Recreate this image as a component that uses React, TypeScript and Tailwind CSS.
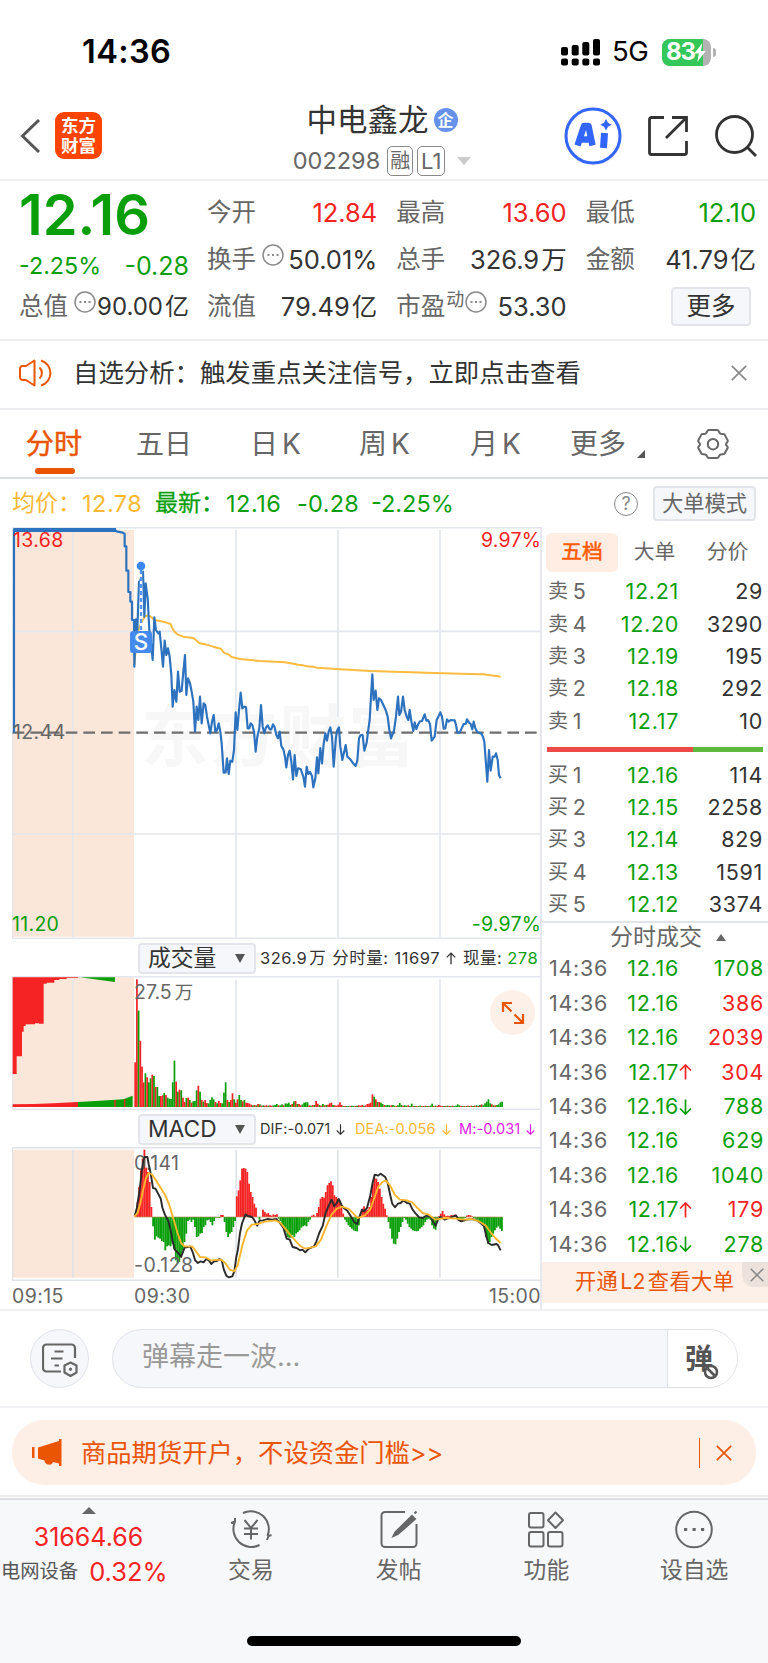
import type { ReactNode } from "react";
import clsx from "clsx";

const GREEN = "#0a9f0a";
const RED = "#f52323";

const PRICE_LINE =
  "42,638 42,30 345,30 350,34 368,38 374,42 374,79 379,79 379,152 385,152 385,216 391,216 391,245 396,245 396,300 402,300 403,440 408,298 412,330 417,186 424,175 429,155 433,290 437,190 443,235 448,330 453,370 458,420 463,292 468,330 475,340 479,335 484,385 489,440 494,362 499,405 504,385 509,410 514,465 518,560 523,510 529,545 534,455 539,515 545,512 550,455 555,405 559,525 564,475 570,490 575,515 580,545 585,635 590,560 595,600 600,530 605,610 611,550 616,555 621,590 626,615 631,640 636,605 641,585 646,635 651,630 656,610 661,635 665,670 671,758 677,757 681,715 686,762 691,722 697,725 702,690 707,577 712,630 717,570 722,518 727,565 733,560 738,562 743,625 748,625 752,610 757,615 762,635 767,695 772,650 778,625 783,555 788,620 793,640 798,622 803,616 809,628 814,628 819,613 824,622 829,645 834,655 839,635 844,678 850,688 855,710 859,742 864,705 869,692 874,725 879,778 884,705 889,768 894,745 902,747 910,770 915,800 920,740 925,762 930,756 936,768 940,802 946,775 951,712 955,760 961,684 966,730 971,672 976,640 981,662 986,635 991,622 996,650 1001,740 1008,650 1012,630 1017,622 1021,680 1027,720 1037,675 1042,710 1050,717 1058,728 1067,738 1072,722 1077,655 1082,645 1088,645 1093,692 1100,668 1105,628 1109,600 1113,530 1117,463 1121,540 1127,512 1132,570 1137,535 1143,540 1150,555 1157,570 1163,590 1168,630 1173,655 1182,632 1188,590 1194,530 1198,585 1203,575 1209,530 1214,570 1220,590 1225,600 1229,570 1235,610 1240,633 1244,607 1249,627 1255,612 1260,604 1266,603 1274,583 1279,602 1284,600 1290,612 1295,662 1304,650 1310,600 1315,590 1321,577 1326,590 1331,626 1336,625 1341,598 1346,605 1352,600 1364,601 1368,615 1372,638 1379,638 1385,625 1391,612 1397,612 1401,598 1407,608 1412,612 1417,628 1421,605 1426,625 1432,636 1444,641 1449,650 1453,665 1462,785 1467,690 1472,752 1478,710 1484,710 1488,700 1493,720 1497,765 1502,775";

const AVG_LINE =
  "403,435 408,380 412,345 417,325 425,305 434,290 443,286 453,290 462,300 480,303 497,307 512,312 517,325 524,336 534,344 550,350 580,354 588,360 597,369 620,374 640,380 662,386 672,398 685,403 695,411 720,417 780,423 855,427 880,431 895,434 910,436 920,439 940,440 950,443 1010,447 1110,453 1230,457 1380,461 1450,463 1470,466 1490,468 1502,470";

// bar heights per minute, negative values are drawn green
const VOLUMES = [
  134, 383, -289, 199, 121, 74, -101, 89, -74, -86, 97, -93, 60, -60, -33, 33, 35, -42, 36, -28, -25, -24, -74, -139,
  76, -46, 52, -50, 28, 15, -27, 28, -21, 13, -17, -18, -50, 64, -46, 21, -16, 21, 12, -11, -21, -29, -23, 15, -11, 18,
  12, -11, -43, -74, 21, -15, 21, 41, -23, 13, 23, -36, -21, 17, -21, 13, 12, 10, 7, -5, 6, -5, 9, -8, 4, -5, 4, 5, -4,
  5, 4, -5, -6, -9, 5, -5, -8, 5, -11, -10, -13, -6, 9, -17, 18, -9, 9, 5, -8, -13, -14, -14, 5, -4, 6, -6, 18, 10, -6,
  4, -9, 5, -6, 7, 11, 13, -6, 5, 4, 7, 14, 6, -3, 3, -3, -3, 3, -4, -3, 3, -4, 5, 4, 6, -4, 5, 9, 10, 13, 38, -31, 23,
  -15, 15, -13, -9, 6, -5, -6, -5, 5, -6, -4, 3, -5, -12, -6, 4, -5, -4, 5, -3, -10, 3, -3, 3, -3, -4, 3, -3, 4, -3, 3,
  -4, -10, 3, -4, 3, 6, 4, 3, -3, 3, -4, 3, -3, 4, -3, -4, -8, -5, 3, -3, 3, -3, 4, -3, 4, -3, 4, -5, 3, -6, 8, -5, -11,
  -16, -23, -11, 8, -5, 5, -6, -8, -14, -16,
];

const MACD_BARS = [
  10, 45, 90, 140, 175, 202, 148, 135, 105, 30, -28, -68, -58, -62, -65, -72, -75, -100, -88, -85, -88, -80, -95, -130,
  -140, -135, -120, -100, -75, -50, -12, -8, -15, -8, -30, -60, -58, -50, -48, -30, -25, -10, -8, -15, -25, -12, -2, -2,
  -3, 6, 6, -15, -45, -60, -50, -45, -30, -12, 62, 80, 110, 145, 147, 145, 135, 100, 75, 60, 40, 28, 0, -8, 0, 22, 15,
  10, 12, 6, 4, 8, 6, 8, -5, -12, -25, -35, -45, -60, -62, -62, -55, -60, -50, -45, -40, -32, -28, -25, -28, -15, -8, 4,
  7, 2, 12, 30, 55, 60, 58, 75, 95, 102, 107, 95, 65, 60, 55, 45, 30, 10, -8, -15, -25, -30, -35, -40, -42, -43, -25, 5,
  25, 32, 22, 22, 30, 60, 100, 118, 115, 105, 85, 60, 40, 25, 5, -15, -35, -65, -80, -82, -65, -45, -30, -15, -3, -8,
  -20, -30, -35, -40, -42, -43, -42, -35, -30, -25, -15, -8, -5, -8, -25, -35, -38, -15, 3, 10, 18, 8, 3, 4, 3, 6, 5, 7,
  3, -3, -8, -10, -5, -3, 4, 6, 5, 2, -3, -5, -8, -12, -15, -22, -35, -60, -80, -75, -60, -50, -40, -32, -28, -35, -42,
];

const MACD_STEP = 1049 / MACD_BARS.length;

const DIF_LINE =
  "384,348 390,325 398,270 404,215 409,180 413,172 420,172 424,195 430,225 436,265 443,267 452,285 458,297 463,325 470,345 480,365 486,390 492,425 498,450 508,460 516,472 522,455 527,442 532,443 542,440 550,460 556,482 564,490 572,485 580,488 588,478 595,482 602,493 610,485 618,484 625,478 632,482 638,510 645,528 652,533 662,530 668,515 673,475 678,450 684,400 690,370 700,344 706,349 718,352 724,360 733,378 740,363 750,362 762,358 775,360 788,358 798,370 808,385 817,417 826,420 834,442 845,445 855,452 862,450 870,458 880,447 895,440 902,425 910,400 920,378 928,340 936,320 945,300 953,320 960,310 966,298 973,315 980,325 990,333 1000,350 1010,368 1018,373 1025,350 1032,330 1038,335 1046,325 1055,290 1062,250 1068,225 1078,228 1085,222 1098,232 1105,250 1112,285 1118,312 1126,323 1134,312 1142,310 1150,302 1160,310 1168,312 1175,328 1185,342 1195,353 1205,355 1215,348 1228,352 1235,368 1242,378 1248,360 1256,352 1268,360 1280,355 1300,347 1306,360 1315,365 1330,360 1345,358 1358,362 1370,370 1380,380 1386,410 1392,430 1402,436 1415,433 1420,437 1427,452";

const DEA_LINE =
  "384,350 392,340 400,310 408,270 416,235 424,220 432,223 440,235 455,260 470,285 482,315 495,360 506,400 516,430 526,440 548,440 560,457 570,472 585,473 600,482 630,480 642,490 655,510 668,515 678,495 690,440 704,392 718,375 735,373 755,366 785,362 800,370 815,390 835,415 855,438 870,447 900,440 915,420 930,380 945,345 960,327 975,321 995,328 1010,345 1020,355 1040,347 1055,330 1065,300 1078,262 1090,247 1100,243 1112,258 1125,285 1140,300 1160,302 1175,308 1190,325 1205,340 1222,345 1240,360 1270,355 1300,357 1325,360 1345,358 1365,365 1385,378 1400,400 1412,415 1427,430";

const SELLS = [
  ["5", "12.21", "29"],
  ["4", "12.20", "3290"],
  ["3", "12.19", "195"],
  ["2", "12.18", "292"],
  ["1", "12.17", "10"],
];

const BUYS = [
  ["1", "12.16", "114"],
  ["2", "12.15", "2258"],
  ["3", "12.14", "829"],
  ["4", "12.13", "1591"],
  ["5", "12.12", "3374"],
];

const TRADES = [
  { price: "12.16", arrow: "", vol: "1708", up: false },
  { price: "12.16", arrow: "", vol: "386", up: true },
  { price: "12.16", arrow: "", vol: "2039", up: true },
  { price: "12.17", arrow: "up", vol: "304", up: true },
  { price: "12.16", arrow: "down", vol: "788", up: false },
  { price: "12.16", arrow: "", vol: "629", up: false },
  { price: "12.16", arrow: "", vol: "1040", up: false },
  { price: "12.17", arrow: "up", vol: "179", up: true },
  { price: "12.16", arrow: "down", vol: "278", up: false },
];

function Arrow({ up, className }: { up?: boolean; className?: string }) {
  return (
    <svg viewBox="0 0 13 16" className={clsx("shrink-0", className)} fill="none" stroke="currentColor" strokeWidth="1.7">
      <path d={up ? "M6.5 15.5V1M1 6.5 6.5 1 12 6.5" : "M6.5 .5V15M1 9.500 6.500 15 12 9.500"} />
    </svg>
  );
}

function Cross({ className }: { className?: string }) {
  return (
    <svg viewBox="0 0 16 16" className={clsx("shrink-0", className)} fill="none" stroke="currentColor" strokeWidth="1.7">
      <path d="M.8.8l14.400 14.400M15.200.8.8 15.200" />
    </svg>
  );
}

function InfoDots() {
  return (
    <svg viewBox="0 0 22 22" className="mb-[9px] size-[22px] shrink-0" fill="none" stroke="#8a8a8a" strokeWidth="1.500">
      <circle cx="11" cy="11" r="10" />
      <path d="M5.500 11h2M10 11h2M14.500 11h2" strokeWidth="2" />
    </svg>
  );
}

function StatusBar() {
  return (
    <div className="flex h-[92px] items-center pt-[12px] pr-[52px] pl-[82px] text-black">
      <span className="text-[32.500px] font-semibold tracking-[0.4px]">14:36</span>
      <svg viewBox="0 0 39 27" className="ml-auto h-[27px] w-[39px]">
        <rect x="0" y="8" width="7" height="8.500" rx="2" />
        <rect x="10.700" y="6" width="7" height="10.500" rx="2" />
        <rect x="21.300" y="3" width="7" height="13.500" rx="2" />
        <rect x="32" y="0" width="7" height="16.500" rx="2" />
        <rect x="0" y="19.500" width="7" height="7" rx="2" />
        <rect x="10.700" y="19.500" width="7" height="7" rx="2" />
        <rect x="21.300" y="19.500" width="7" height="7" rx="2" />
        <rect x="32" y="19.500" width="7" height="7" rx="2" />
      </svg>
      <span className="ml-[12px] w-[37px] text-[27.500px] tracking-[-0.500px]">5G</span>
      <div className="ml-[13px] flex h-[27px] w-[49px] items-center overflow-hidden rounded-[8px] bg-[#b3b3b3]">
        <div className="flex h-full w-[41px] items-center bg-[#34c759] pl-[4px] text-[24px] font-bold tracking-[-1px] text-white">
          83
          <svg viewBox="0 0 12 20" className="relative -ml-px h-[19px] w-[12px] shrink-0 fill-white">
            <path d="M8.500 0 0 11h4.800L3.200 20 12 8.500H7z" />
          </svg>
        </div>
      </div>
      <div className="ml-[2px] h-[9px] w-[3px] rounded-r-full bg-[#b3b3b3]" />
    </div>
  );
}

function Header() {
  return (
    <div className="flex h-[89px] border-b-2 border-[#efeff1]">
      <div className="flex w-[282px] items-start pl-[20px]">
        <svg viewBox="0 0 20 34" className="mt-[27px] h-[34px] w-[20px]" fill="none" stroke="#555" strokeWidth="3">
          <path d="M19 1 2.500 17 19 33" />
        </svg>
        <div className="mt-[20px] ml-[15px] flex h-[47px] w-[47px] flex-col items-center justify-center rounded-[9px] bg-[#ff4400] text-[17.500px] leading-[20px] font-bold text-white">
          <span>东方</span>
          <span>财富</span>
        </div>
      </div>
      <div className="flex w-[200px] flex-col items-center">
        <div className="mt-[9px] flex h-[38px] items-center gap-[5px] text-[30.500px] text-[#333]">
          中电鑫龙
          <span className="flex size-[24px] items-center justify-center rounded-full bg-[#6591ea] text-[16px] font-bold text-white">
            企
          </span>
        </div>
        <div className="mt-[7px] flex h-[30px] items-center text-[23.500px] text-[#666]">
          <span>002298</span>
          <span className="ml-[7px] flex h-[30px] w-[26px] items-center justify-center rounded-[5px] border-[1.500px] border-[#888] text-[20px]">
            融
          </span>
          <span className="ml-[4px] flex h-[30px] w-[28px] items-center justify-center rounded-[5px] border-[1.500px] border-[#888] text-[22px]">
            L1
          </span>
          <svg viewBox="0 0 14 8" className="ml-[12px] h-[8px] w-[14px] fill-[#ccc]">
            <path d="M0 0h14L7 8z" />
          </svg>
        </div>
      </div>
      <div className="ml-auto flex items-start pt-[15px] pr-[11px]">
        <svg viewBox="0 0 58 58" className="size-[58px]" fill="none" stroke="#3366ff">
          <circle cx="29" cy="29" r="27" strokeWidth="3" />
          <path d="M13.500 38.500 20 19h4.500L28.500 38.500M17 32.500h10" strokeWidth="6.400" strokeLinejoin="round" />
          <path d="M40.500 26 39.500 41" strokeWidth="7" />
          <path d="M42 12l2 3.700 3.700 2-3.700 2-2 3.700-2-3.700-3.700-2 3.700-2z" fill="#3366ff" stroke="none" />
        </svg>
        <svg viewBox="0 0 40 40" className="mt-[9px] ml-[26px] size-[40px]" fill="none" stroke="#333" strokeWidth="2.800">
          <path d="M16 1.500H3.500a2 2 0 0 0-2 2v33a2 2 0 0 0 2 2h33a2 2 0 0 0 2-2V25M24 1.500h14.500V16M38.500 1.500 18 22" />
        </svg>
        <svg viewBox="0 0 42 42" className="mt-[8px] ml-[27px] size-[42px]" fill="none" stroke="#333" strokeWidth="2.800">
          <circle cx="19.500" cy="19.500" r="18" />
          <path d="M32 32l9 9" />
        </svg>
      </div>
    </div>
  );
}

interface StatProps {
  label: ReactNode;
  value: string;
  unit?: string;
  className?: string;
}

function Stat({ label, value, unit, className = "text-[25.500px] text-[#333]" }: StatProps) {
  return (
    <div className="flex h-[47px] items-center justify-between">
      <span className="flex items-center text-[24.500px] whitespace-nowrap text-[#666]">{label}</span>
      <span className={clsx("whitespace-nowrap", className)}>
        {value}
        {unit && <span className="ml-[2px]">{unit}</span>}
      </span>
    </div>
  );
}

function QuotePanel() {
  return (
    <div className="flex h-[160px] gap-[18px] border-b-2 border-[#ececee] pt-[8px] pr-[12px] pl-[19px]">
      <div className="flex w-[170px] flex-col">
        <div className="flex h-[52px] items-center text-[56px] font-semibold text-[#0a9f0a]">12.16</div>
        <div className="flex h-[42px] items-center justify-between pt-[8px] text-[#0a9f0a]">
          <span className="text-[23.300px]">-2.25%</span>
          <span className="text-[25px]">-0.28</span>
        </div>
        <Stat
          label={<>总值<span className="ml-[6px]"><InfoDots /></span></>}
          value="90.00"
          unit="亿"
          className="text-[24px] text-[#333]"
        />
      </div>
      <div className="grid flex-1 grid-cols-3 content-start gap-x-[19px]">
        <Stat label="今开" value="12.84" className="text-[25.500px] text-[#f52323]" />
        <Stat label="最高" value="13.60" className="text-[25.500px] text-[#f52323]" />
        <Stat label="最低" value="12.10" className="text-[25.500px] text-[#0a9f0a]" />
        <Stat label={<>换手<span className="ml-[6px]"><InfoDots /></span></>} value="50.01%" />
        <Stat label="总手" value="326.9" unit="万" />
        <Stat label="金额" value="41.79" unit="亿" />
        <Stat label="流值" value="79.49" unit="亿" />
        <Stat
          label={
            <>
              市盈<span className="mb-[14px] ml-[1px] text-[18px]">动</span>
              <span className="ml-[1px]"><InfoDots /></span>
            </>
          }
          value="53.30"
        />
        <div className="flex items-center justify-end pr-[5px]">
          <button className="h-[39px] w-[80px] rounded-[4px] border-2 border-[#e3e5eb] bg-[#f6f7fa] pb-[1px] text-[24.500px] text-[#333]">
            更多
          </button>
        </div>
      </div>
    </div>
  );
}

function Notice() {
  return (
    <div className="flex h-[69px] items-center border-b-2 border-[#ececee] pr-[21px] pb-[3px] pl-[19px]">
      <svg viewBox="0 0 34 28" className="h-[28px] w-[34px]" fill="none" stroke="#ea5504" strokeWidth="2">
        <path d="M15.500 1.500v25L7 21H3.500a2.500 2.500 0 0 1-2.500-2.500v-9A2.500 2.500 0 0 1 3.500 7H7z" strokeLinejoin="round" />
        <path d="M20.500 8.500a7.500 7.500 0 0 1 0 11M22 1.500a13 13 0 0 1 0 25" />
      </svg>
      <span className="ml-[20px] text-[25.400px] text-[#333]">自选分析：触发重点关注信号，立即点击查看</span>
      <Cross className="ml-auto size-[16px] text-[#888]" />
    </div>
  );
}

function PeriodTabs() {
  return (
    <div className="flex h-[69px] items-center border-b-2 border-[#dcdee6] pl-[26px] text-[28px] text-[#666]">
      <div className="relative w-[110px] text-[#ea5504] [-webkit-text-stroke:0.5px_#ea5504]">
        分时
        <div className="absolute top-[38px] left-[9px] h-[6px] w-[40px] rounded-[3px] bg-[#ea5504]" />
      </div>
      <div className="w-[114px]">五日</div>
      <div className="w-[109px] tracking-[4px]">日K</div>
      <div className="w-[111px] tracking-[4px]">周K</div>
      <div className="w-[100px] tracking-[4px]">月K</div>
      <div className="flex w-[127px] items-center">
        更多
        <svg viewBox="0 0 8 8" className="mt-[20px] ml-[11px] size-[8px] fill-[#555]">
          <path d="M8 0v8H0z" />
        </svg>
      </div>
      <svg viewBox="0 0 32 32" className="size-[32px]" fill="none" stroke="#666" strokeWidth="2">
        <path
          d="M11.500 2h9c1 0 1.500 2.800 2.800 3.600 1.300.8 3.500-.2 4.200.8l3.300 6.200c.5 1-1.800 2.200-1.800 3.600s2.300 2.600 1.800 3.600l-3.300 6c-.7 1-2.900 0-4.200.8-1.300.8-1.800 3.400-2.800 3.400h-9c-1 0-1.500-2.600-2.800-3.400-1.300-.8-3.500.2-4.200-.8l-3.300-6c-.5-1 1.800-2.200 1.800-3.600s-2.300-2.600-1.800-3.600l3.300-6.200c.7-1 2.900 0 4.200-.8C10 4.800 10.500 2 11.500 2z"
          strokeLinejoin="round"
        />
        <circle cx="16" cy="16.200" r="5.200" />
      </svg>
    </div>
  );
}

function SummaryRow() {
  return (
    <div className="flex h-[48px] items-center pt-[1px] pr-[12px] pl-[12px] text-[23.500px]">
      <span className="w-[70px] text-[23px] text-[#fdb933]">均价：</span>
      <span className="w-[73px] tracking-[0.500px] text-[#fdb933]">12.78</span>
      <span className="w-[71px] text-[23px] text-[#0a9f0a] [-webkit-text-stroke:0.3px_#0a9f0a]">最新：</span>
      <span className="w-[71px] tracking-[0.500px] text-[#0a9f0a]">12.16</span>
      <span className="w-[74px] tracking-[0.300px] text-[#0a9f0a]">-0.28</span>
      <span className="text-[#0a9f0a]">-2.25%</span>
      <span className="mr-[15px] ml-auto flex size-[24px] items-center justify-center rounded-full border-[1.500px] border-[#888] text-[18px] text-[#888]">
        ?
      </span>
      <button className="h-[35px] w-[103px] rounded-[4px] border-2 border-[#e3e5eb] bg-[#f6f7fa] text-[21.300px] whitespace-nowrap text-[#666]">
        大单模式
      </button>
    </div>
  );
}

function PriceChart() {
  return (
    <div className="relative h-[412px]">
      <svg viewBox="36 21 1590 1236" className="block h-[412px] w-[530px]" fill="none">
        <path d="M38 30h364v1220H38z" fill="#fbe6da" />
        <path d="M36 23h1590M37 23v1234M219 30v1220M708 30v1220M1014 30v1220M1320 30v1220M38 334h1586M38 942h1586M36 1255h1590" stroke="#e3e6ec" strokeWidth="5" />
        <text x="424" y="723" fontSize="200" fontWeight="700" letterSpacing="7" fill="#f7f7f7">东方财富</text>
        <path d="M38 638h1580" stroke="#6e6e6e" strokeWidth="7" strokeDasharray="35 18" />
        <polyline points={AVG_LINE} stroke="#fdbb3f" strokeWidth="6" strokeLinejoin="round" />
        <path d="M40 30h308" stroke="#2d72be" strokeWidth="12" />
        <polyline points={PRICE_LINE} stroke="#2d72be" strokeWidth="6.500" strokeLinejoin="round" />
        <path d="M423 150v185" stroke="#fff" strokeWidth="7" />
        <path d="M423 150v185" stroke="#4f97f2" strokeWidth="7" strokeDasharray="12 9" />
        <circle cx="423" cy="138" r="13" fill="#3b86f0" />
        <rect x="390" y="333" width="66" height="66" rx="10" fill="#4489ec" />
        <text x="423" y="389" textAnchor="middle" fontSize="67" fontWeight="500" fill="#fff">S</text>
      </svg>
      <span className="absolute top-[1px] left-[1px] text-[19.500px] leading-[24px] tracking-[0.400px] text-[#f52323]">13.68</span>
      <span className="absolute top-[1px] right-[1px] text-[19.500px] leading-[24px] tracking-[0.200px] text-[#f52323]">9.97%</span>
      <span className="absolute top-[193px] left-[1px] text-[19.500px] leading-[24px] tracking-[0.400px] text-[#666]">12.44</span>
      <span className="absolute top-[385px] left-[0px] text-[19.500px] leading-[24px] tracking-[0.300px] text-[#0a9f0a]">11.20</span>
      <span className="absolute top-[385px] right-[1px] text-[19.500px] leading-[24px] tracking-[0.200px] text-[#0a9f0a]">-9.97%</span>
    </div>
  );
}

function IndicatorSelect({ name }: { name: string }) {
  return (
    <button className="flex h-[31px] w-[118px] shrink-0 items-center rounded-[4px] border-2 border-[#e3e5eb] bg-[#f6f7fa] pr-[9px] pl-[8px] text-[22.800px] tracking-normal text-[#333]">
      {name}
      <svg viewBox="0 0 10 9" className="ml-auto h-[9px] w-[10px] fill-[#555]">
        <path d="M0 0h10L5 9z" />
      </svg>
    </button>
  );
}

function VolumeChart() {
  return (
    <div className="relative h-[134px]">
      <svg viewBox="36 108 1590 402" className="block h-[134px] w-[530px]">
        <path d="M38 112h364v388H38z" fill="#fbe6da" />
        <path d="M36 110h1590M36 508h1590M37 110v400M219 118v382M708 118v382M1014 118v382M1320 118v382" stroke="#e3e6ec" strokeWidth="5" fill="none" />
        <path d="M38 112V402h12V349h16V275h5V258h6V253h28V250h12v1h14V131h9V128h23V120h15V117h22V114h34V112z" fill={RED} />
        <path d="M240 112h105v14l-50-7z" fill={GREEN} />
        <path d="M38 493 100 492 160 490 234 486V501H38z" fill={RED} />
        <path d="M234 486 300 482 370 478 390 470 398 467V501H234z" fill={GREEN} />
        <path d="M345 480v21M374 478v23" stroke={RED} strokeWidth="4" />
        {VOLUMES.map((v, i) => (
          <rect key={i} x={403 + i * 5.12} y={501 - Math.abs(v)} width="5.200" height={Math.abs(v)} fill={v > 0 ? RED : GREEN} />
        ))}
      </svg>
      <span className="absolute top-[4px] left-[122px] text-[19.500px] leading-[24px] text-[#666]">
        27.5<span className="ml-[3px] text-[18.500px]">万</span>
      </span>
      <div className="absolute top-[14px] right-[7px] flex size-[45px] items-center justify-center rounded-full bg-[#fdf0e9]">
        <svg viewBox="0 0 24 24" className="size-[24px]" fill="none" stroke="#ea5504" strokeWidth="2.200">
          <path d="M2 11V2h9M2 2l8.500 8.500M22 13v9h-9M22 22l-8.500-8.500" />
        </svg>
      </div>
    </div>
  );
}

function MacdChart() {
  return (
    <div className="relative h-[134px]">
      <svg viewBox="34 142 1511 402" preserveAspectRatio="none" className="block h-[134px] w-[530px]" fill="none">
        <path d="M36 150h346v384H36z" fill="#fbe6da" />
        <path d="M34 144h1511M34 542h1511M35 142v402M208 150v384M673 150v384M963 150v384M1254 150v384" stroke="#dfe2e9" strokeWidth="4.500" />
        {MACD_BARS.map((v, i) => (
          <rect key={i} x={384 + i * MACD_STEP} y={v > 0 ? 352 - v : 352} width="5.200" height={Math.abs(v)} fill={v > 0 ? RED : GREEN} />
        ))}
        <path d="M382 352h1050" stroke="#b98a5a" strokeWidth="2" />
      </svg>
      <span className="absolute top-[4px] left-[122px] text-[19.500px] leading-[24px] tracking-[0.300px] text-[#666]">0.141</span>
      <span className="absolute top-[106px] left-[122px] text-[19.500px] leading-[24px] tracking-[0.500px] text-[#666]">-0.128</span>
      <svg viewBox="34 142 1511 402" preserveAspectRatio="none" className="absolute inset-0 h-[134px] w-[530px]" fill="none">
        <polyline points={DIF_LINE} stroke="#2a2a2a" strokeWidth="5.500" strokeLinejoin="round" />
        <polyline points={DEA_LINE} stroke="#fdb52c" strokeWidth="5.500" strokeLinejoin="round" />
      </svg>
    </div>
  );
}

function Charts() {
  return (
    <div className="w-[542px] border-r-2 border-[#e6e8ee] pl-[12px]">
      <div className="w-[530px]">
        <PriceChart />
        <div className="flex h-[37px] items-center pt-[1px] pl-[126px] text-[16.500px] tracking-[0.500px] whitespace-nowrap text-[#333]">
          <IndicatorSelect name="成交量" />
          <span className="ml-[4px]">
            326.9<span className="ml-[2px]">万</span>
          </span>
          <span className="ml-[6px]">分时量:</span>
          <span className="ml-[6px]">11697</span>
          <Arrow up className="mr-[7px] ml-[6px] h-[13px] w-[10px]" />
          <span>现量:</span>
          <span className="ml-[5px] text-[#0a9f0a]">278</span>
        </div>
        <VolumeChart />
        <div className="flex h-[37px] items-center pt-[1px] pl-[126px] text-[14.500px] tracking-[0.100px] whitespace-nowrap">
          <IndicatorSelect name="MACD" />
          <span className="ml-[4px] flex w-[95px] items-center gap-[6px] text-[#333]">
            DIF:-0.071 <Arrow className="h-[11px] w-[9px]" />
          </span>
          <span className="flex w-[104px] items-center gap-[6px] text-[#fdb933]">
            DEA:-0.056 <Arrow className="h-[11px] w-[9px]" />
          </span>
          <span className="flex items-center gap-[6px] text-[#e020e8]">
            M:-0.031 <Arrow className="h-[11px] w-[9px]" />
          </span>
        </div>
        <MacdChart />
        <div className="flex h-[28px] items-center pt-[3px] pr-[1px] text-[19.500px] tracking-[0.400px] text-[#666]">
          <span className="w-[122px]">09:15</span>
          <span>09:30</span>
          <span className="ml-auto">15:00</span>
        </div>
      </div>
    </div>
  );
}

function BookRow({ side, row }: { side: string; row: string[] }) {
  return (
    <div className="flex h-[32.300px] items-center pr-[5px] pl-[6px] text-[21.500px] tracking-[0.700px]">
      <span className="flex w-[50px] gap-[4px] text-[#666]">
        <span className="text-[20px]">{side}</span>
        {row[0]}
      </span>
      <span className="w-[81px] text-right text-[#0a9f0a]">{row[1]}</span>
      <span className="flex-1 text-right text-[#333]">{row[2]}</span>
    </div>
  );
}

function OrderBook() {
  return (
    <div className="flex-1">
      <div className="flex h-[49px] items-center pt-[1px] pl-[4px] text-[20.800px] text-[#666]">
        <div className="flex h-[39px] w-[72px] items-center justify-center rounded-[6px] bg-[#ffede4] text-[#ff5a00] [-webkit-text-stroke:0.5px_#ff5a00]">
          五档
        </div>
        <div className="w-[73px] text-center">大单</div>
        <div className="w-[73px] text-center">分价</div>
      </div>
      {SELLS.map((row) => (
        <BookRow key={row[0]} side="卖" row={row} />
      ))}
      <div className="mt-[10px] ml-[5px] flex h-[5px] w-[216px]">
        <div className="w-[146px] bg-[#ee4b48]" />
        <div className="flex-1 bg-[#5cb83f]" />
      </div>
      <div className="pt-[7px]">
        {BUYS.map((row) => (
          <BookRow key={row[0]} side="买" row={row} />
        ))}
      </div>
      <div className="flex h-[31px] items-center border-t-2 border-[#e1e4eb] pl-[68px] text-[23px] text-[#666]">
        分时成交
        <svg viewBox="0 0 10 7" className="ml-[14px] h-[7px] w-[10px] fill-[#666]">
          <path d="M5 0l5 7H0z" />
        </svg>
      </div>
      {TRADES.map((t, i) => (
        <div key={i} className="flex h-[34.400px] items-center pr-[4px] pl-[7px] text-[21.500px] tracking-[0.700px]">
          <span className="w-[58px] text-[#666]">14:36</span>
          <span className="w-[72px] text-right text-[#0a9f0a]">{t.price}</span>
          <span className="w-[14px]">
            {t.arrow && (
              <Arrow up={t.arrow === "up"} className={clsx("h-[16px] w-[13px]", t.up ? "text-[#f52323]" : "text-[#0a9f0a]")} />
            )}
          </span>
          <span className={clsx("flex-1 text-right", t.up ? "text-[#f52323]" : "text-[#0a9f0a]")}>{t.vol}</span>
        </div>
      ))}
      <div className="relative mt-[1px] flex h-[41px] items-center bg-[#fdf0e9] pb-[3px] pl-[33px] text-[21.300px] tracking-[0.300px] text-[#ea5504]">
        开通<span className="mx-[2px]">L2</span>查看大单
        <div className="absolute top-0 right-0 flex h-[25px] w-[26px] items-center justify-center rounded-bl-[12px] bg-[#ece1db] text-[#888]">
          <Cross className="ml-[4px] size-[14px]" />
        </div>
      </div>
    </div>
  );
}

function CommentBar() {
  return (
    <div className="flex h-[99px] items-center border-t-2 border-b-2 border-[#f1f1f3] pr-[30px] pl-[30px]">
      <div className="flex size-[59px] items-center justify-center rounded-full border-[1.500px] border-[#e0e2ea] bg-[#f6f7fa]">
        <svg viewBox="0 0 36 34" className="mt-[2px] h-[34px] w-[36px]" fill="none" stroke="#666" strokeWidth="2.200">
          <path d="M33 15V5a3.500 3.500 0 0 0-3.500-3.500h-25A3.500 3.500 0 0 0 1 5v20a3.500 3.500 0 0 0 3.500 3.500H19M12.500 8.500h9M9 15.500h11.500M12.500 22.500h4.500" />
          <path d="M28.500 19.500 34.500 22.500v7l-6 3.500-6-3.500v-7z" strokeLinejoin="round" />
          <circle cx="28.500" cy="26.200" r="1.200" fill="#666" strokeWidth="1" />
        </svg>
      </div>
      <div className="ml-[23px] flex h-[59px] flex-1 overflow-hidden rounded-full border-[1.500px] border-[#e0e2ea] bg-[#f6f7fa]">
        <div className="flex flex-1 items-center pb-[4px] pl-[29px] text-[27px] text-[#999]">弹幕走一波...</div>
        <div className="flex w-[70px] items-center border-l-[1.500px] border-[#e0e2ea] bg-white pl-[17px]">
          <div className="relative text-[28px] leading-[34px] font-bold text-[#555]">
            弹
            <svg viewBox="0 0 16 16" className="absolute -right-[6px] -bottom-[4px] size-[16px]" fill="#fff" stroke="#555" strokeWidth="2.600">
              <circle cx="8" cy="8" r="6" />
              <path d="M4.500 4.500l7 7" />
            </svg>
          </div>
        </div>
      </div>
    </div>
  );
}

function PromoBanner() {
  return (
    <div className="flex h-[89px] items-start border-b-2 border-[#ececee] px-[12px] pt-[12px]">
      <div className="flex h-[65px] w-[744px] items-center rounded-[32px] bg-[#fdeee6] pr-[24px] pl-[19px] text-[#ea5504]">
        <svg viewBox="0 0 32 27" className="h-[27px] w-[32px]" fill="#ea5504">
          <path d="M1 8h2.500v11H1zM7 8.500 28 2V0h2.500v27H28v-2.500l-6-1.500c-.5 2-2.500 3-5 2.500-2-.5-3.500-2-3.500-4L7 19.500z" />
        </svg>
        <span className="ml-[18px] text-[25.300px]">商品期货开户，不设资金门槛&gt;&gt;</span>
        <div className="ml-auto h-[30px] w-[1.500px] bg-[#ea5504]" />
        <Cross className="ml-[16px] size-[16px]" />
      </div>
    </div>
  );
}

function NavItem({ label, children }: { label: string; children: ReactNode }) {
  return (
    <div className="flex flex-1 flex-col items-center pt-[9px] text-[22.800px] text-[#666]">
      <svg viewBox="0 0 42 40" className="h-[40px] w-[42px]" fill="none" stroke="#666" strokeWidth="2">
        {children}
      </svg>
      <span className="mt-[6px] leading-[30px]">{label}</span>
    </div>
  );
}

function BottomNav() {
  return (
    <div className="mt-[1px] flex h-[165px] flex-col border-t-2 border-[#dcdee3] bg-[#f7f8fa]">
      <div className="flex h-[136px]">
        <div className="flex w-[177px] flex-col items-center text-[#f52323]">
          <svg viewBox="0 0 14 7" className="mt-[7px] h-[7px] w-[14px] fill-[#666]">
            <path d="M7 0l7 7H0z" />
          </svg>
          <span className="mt-[8px] text-[25px] leading-[30px]">31664.66</span>
          <div className="mt-[5px] flex items-center self-start pl-[1px] whitespace-nowrap">
            <span className="text-[19.300px] text-[#555]">电网设备</span>
            <span className="ml-[11px] text-[25.500px] leading-[30px]">0.32%</span>
          </div>
        </div>
        <NavItem label="交易">
          <path d="M13 4a18 18 0 0 1 24.500 23M37 31l1.500-4 3-1M29.500 36A18 18 0 0 1 5 12.500M1 14l4-1.500V9" />
          <path d="M14.500 11l6.500 8 6.500-8M14 19.500h14M14 25h14M21 19v11.500" />
        </NavItem>
        <NavItem label="发帖">
          <path d="M27 3H7a3.500 3.500 0 0 0-3.500 3.500v28A3.500 3.500 0 0 0 7 38h28a3.500 3.500 0 0 0 3.500-3.500V15" />
          <path d="M34 7 37 10 20 25l-4.500 2L17.500 23zM36.500 4.500l2-2" fill="#666" />
        </NavItem>
        <NavItem label="功能">
          <rect x="4" y="4" width="14.500" height="14.500" rx="2" />
          <rect x="4" y="23" width="14.500" height="14.500" rx="2" />
          <rect x="23" y="23" width="14.500" height="14.500" rx="2" />
          <path d="M30.500 3.500 38 11.200 30.500 19 23 11.200z" strokeLinejoin="round" />
        </NavItem>
        <NavItem label="设自选">
          <circle cx="21" cy="20.500" r="17.800" />
          <path d="M11 20.500h3.200M19.500 20.500h3.200M28 20.500h3.200" strokeWidth="3.200" />
        </NavItem>
      </div>
      <div className="ml-[247px] h-[10px] w-[274px] rounded-full bg-black" />
    </div>
  );
}

export default function App() {
  return (
    <div className="h-[1663px] w-[768px] overflow-hidden bg-white font-['Inter','Noto_Sans_CJK_SC',sans-serif] leading-none">
      <StatusBar />
      <Header />
      <QuotePanel />
      <Notice />
      <PeriodTabs />
      <SummaryRow />
      <div className="flex h-[782px]">
        <Charts />
        <OrderBook />
      </div>
      <CommentBar />
      <PromoBanner />
      <BottomNav />
    </div>
  );
}
